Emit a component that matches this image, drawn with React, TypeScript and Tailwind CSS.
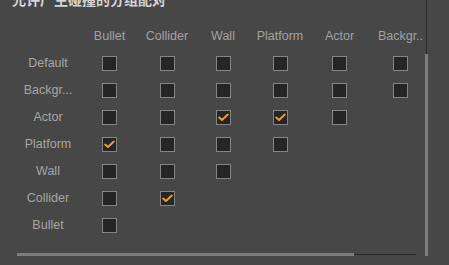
import React from "react";

const columns = ["Bullet", "Collider", "Wall", "Platform", "Actor", "Backgr.."];

const rows = [
  { label: "Default", count: 6, checked: [] as number[] },
  { label: "Backgr...", count: 6, checked: [] },
  { label: "Actor", count: 5, checked: [2, 3] },
  { label: "Platform", count: 4, checked: [0] },
  { label: "Wall", count: 3, checked: [] },
  { label: "Collider", count: 2, checked: [1] },
  { label: "Bullet", count: 1, checked: [] },
];

function Box({ checked }: { checked: boolean }) {
  return (
    <div className="w-[15px] h-[15px] border border-[#858585] bg-[#252525] flex items-center justify-center">
      {checked && (
        <svg width="11" height="9" viewBox="0 0 11 9" fill="none">
          <path
            d="M1.2 4.6 L4 7 L9.8 1.6"
            stroke="#f39b2e"
            strokeWidth="2"
            strokeLinecap="round"
            strokeLinejoin="round"
          />
        </svg>
      )}
    </div>
  );
}

export default function App() {
  return (
    <div
      className="relative w-[449px] h-[265px] overflow-hidden bg-[#474747]"
      style={{ fontFamily: '"Liberation Sans", Arial, sans-serif' }}
    >
      <div
        className="-mt-[8px] h-[14px] pl-[12px] text-[14px] leading-[14px] font-bold text-[#d4d4d4]"
        style={{ fontFamily: '"Noto Sans CJK SC", "Liberation Sans", sans-serif' }}
      >
        允许产生碰撞的分组配对
      </div>

      <div className="mt-[17px] pl-4">
        <div className="grid grid-cols-[64px_59px_56px_56px_58px_61px_61px] h-[27px] items-center text-[12.5px] text-[#a2a2a2]">
          <div />
          {columns.map((c) => (
            <div key={c} className="text-center whitespace-nowrap">
              {c}
            </div>
          ))}
        </div>
        {rows.map((r) => (
          <div
            key={r.label}
            className="grid grid-cols-[64px_59px_56px_56px_58px_61px_61px] h-[27px] items-center text-[12.5px] text-[#a6a6a6]"
          >
            <div className="text-center whitespace-nowrap">{r.label}</div>
            {columns.map((c, i) => (
              <div key={c} className="flex justify-center">
                {i < r.count && <Box checked={r.checked.includes(i)} />}
              </div>
            ))}
          </div>
        ))}
      </div>

      {/* vertical scrollbar */}
      <div className="absolute left-[426px] top-0 w-px h-[54px] bg-[#2a2a2a]" />
      <div className="absolute left-[425px] top-[54px] w-[3px] h-[202px] bg-[#7c7c7c]" />

      {/* horizontal scrollbar */}
      <div className="absolute left-[17px] top-[253px] w-[337px] h-[3px] bg-[#7c7c7c]" />
      <div className="absolute left-[354px] top-[254px] w-[62px] h-px bg-[#2a2a2a]" />
    </div>
  );
}
